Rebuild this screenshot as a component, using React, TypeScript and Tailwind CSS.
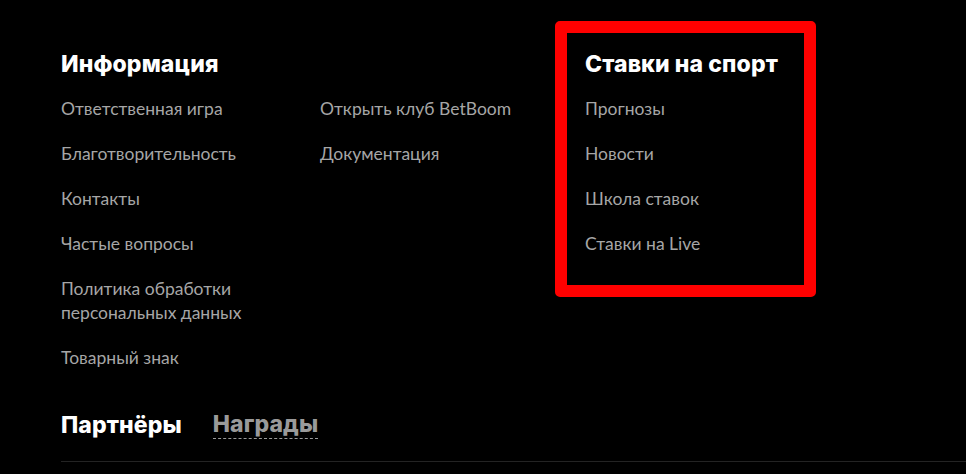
import React from "react";

// Подвал сайта: колонки ссылок, выделенный блок «Ставки на спорт», вкладки «Партнёры / Награды».

const info = [
  "Ответственная игра",
  "Благотворительность",
  "Контакты",
  "Частые вопросы",
  "Политика обработки персональных данных",
  "Товарный знак",
];

const more = ["Открыть клуб BetBoom", "Документация"];

const sport = ["Прогнозы", "Новости", "Школа ставок", "Ставки на Live"];

const heading =
  "text-[23px] leading-[28px] font-extrabold tracking-[0.1px] text-white [font-family:Inter,'Noto_Sans',sans-serif]";

function LinkList({ items, narrow }: { items: string[]; narrow?: boolean }) {
  return (
    <ul className="mt-[19px] flex flex-col gap-[21px]">
      {items.map((item) => (
        <li
          key={item}
          className={`text-[17.5px] leading-[24px] text-[#a6a6a6] ${narrow ? "w-[200px]" : ""}`}
        >
          {item}
        </li>
      ))}
    </ul>
  );
}

export default function App() {
  return (
    <div className="min-h-[474px] w-[966px] overflow-hidden bg-black pl-[61px] [font-family:Lato,'Liberation_Sans',sans-serif]">
      <div className="flex pt-[50px]">
        <div className="w-[259px]">
          <h3 className={heading}>Информация</h3>
          <LinkList items={info} narrow />
        </div>
        <div className="w-[265px]">
          <div className="h-[28px]" />
          <LinkList items={more} />
        </div>
        <div className="relative w-[220px]">
          <div className="pointer-events-none absolute left-[-30px] top-[-29px] h-[276px] w-[261px] rounded-[5px] border-[12px] border-[#ff0000]" />
          <h3 className={heading}>Ставки на спорт</h3>
          <LinkList items={sport} />
        </div>
      </div>

      <div className="mt-[40px] flex items-end gap-[31px]">
        <span className={heading}>Партнёры</span>
        <span className="border-b border-dashed border-[#9a9a9a] text-[23px] leading-[28px] font-extrabold tracking-[0.1px] text-[#9a9a9a] [font-family:Inter,'Noto_Sans',sans-serif]">
          Награды
        </span>
      </div>

      <div className="mt-[22px] h-px bg-[#232323]" />
    </div>
  );
}
